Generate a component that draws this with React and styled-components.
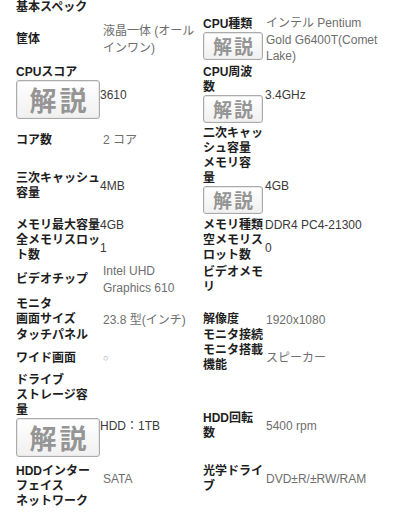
import React from "react";
import styled, { createGlobalStyle } from "styled-components";

const Global = createGlobalStyle`
  html, body { margin: 0; padding: 0; background: #fff; }
  body { font-family: "Liberation Sans", "Noto Sans CJK JP", sans-serif; }
`;

const Page = styled.div`
  width: 404px;
  padding: 0 16px;
  box-sizing: border-box;
  color: #222;
`;

const Title = styled.h2`
  margin: 0;
  font-size: 12px;
  line-height: 15px;
  font-weight: 700;
`;

const Grid = styled.div`
  display: grid;
  grid-template-columns: 84px 103px 62px 1fr;
  align-items: center;
`;

const Label = styled.div`
  font-size: 12px;
  line-height: 15px;
  font-weight: 700;
  color: #1e1e1e;
  white-space: nowrap;
`;

const Value = styled.div`
  font-size: 12px;
  line-height: 16.6px;
  white-space: nowrap;
  color: ${(p) => (p.$tone === "light" ? "#6e6e6e" : "#3a3a3a")};
  padding-left: ${(p) =>
    p.$tone === "light" ? (p.$side === "left" ? "3px" : "1px") : "0"};
`;

const Circle = styled.span`
  font-size: 9px;
  color: #9a9a9a;
`;

const Explain = styled.div`
  display: flex;
  align-items: center;
  justify-content: center;
  box-sizing: border-box;
  width: ${(p) => (p.$big ? "84px" : "60px")};
  height: ${(p) => (p.$big ? "39px" : "28px")};
  margin-bottom: ${(p) => (p.$big ? "7px" : "3px")};
  border: 1px solid #ababab;
  border-radius: 3px;
  background: linear-gradient(#ffffff, #f0f0f0);
  box-shadow: inset 0 0 0 1px #e8e8e8;
  color: #959595;
  font-family: "Noto Sans CJK JP", sans-serif;
  font-weight: 700;
  font-size: ${(p) => (p.$big ? "27px" : "19px")};
  letter-spacing: ${(p) => (p.$big ? "3px" : "2px")};
  line-height: 1;
  text-indent: ${(p) => (p.$big ? "3px" : "2px")};
`;

const rows = [
  {
    l: ["筐体"],
    lv: { t: "light", lines: ["液晶一体 (オール", "インワン)"] },
    r: ["CPU種類"],
    rBtn: true,
    rv: { t: "light", lines: ["インテル Pentium", "Gold G6400T(Comet", "Lake)"] },
  },
  {
    l: ["CPUスコア"],
    lBtn: true,
    lv: { t: "dark", lines: ["3610"] },
    r: ["CPU周波", "数"],
    rBtn: true,
    rv: { t: "dark", lines: ["3.4GHz"] },
  },
  {
    l: ["コア数"],
    lv: { t: "light", lines: ["2 コア"] },
    r: ["二次キャッ", "シュ容量"],
  },
  {
    l: ["三次キャッシュ", "容量"],
    lv: { t: "dark", lines: ["4MB"] },
    r: ["メモリ容", "量"],
    rBtn: true,
    rv: { t: "dark", lines: ["4GB"] },
  },
  {
    l: ["メモリ最大容量"],
    lv: { t: "dark", lines: ["4GB"] },
    r: ["メモリ種類"],
    rv: { t: "dark", lines: ["DDR4 PC4-21300"] },
  },
  {
    l: ["全メモリスロッ", "ト数"],
    lv: { t: "dark", lines: ["1"] },
    r: ["空メモリス", "ロット数"],
    rv: { t: "dark", lines: ["0"] },
  },
  {
    l: ["ビデオチップ"],
    lv: { t: "light", lines: ["Intel UHD", "Graphics 610"] },
    r: ["ビデオメモ", "リ"],
  },
  { l: ["モニタ"] },
  {
    l: ["画面サイズ"],
    lv: { t: "light", lines: ["23.8 型(インチ)"] },
    r: ["解像度"],
    rv: { t: "light", lines: ["1920x1080"] },
  },
  { l: ["タッチパネル"], r: ["モニタ接続"] },
  {
    l: ["ワイド画面"],
    lv: { t: "light", circle: true, lines: ["○"] },
    r: ["モニタ搭載", "機能"],
    rv: { t: "light", lines: ["スピーカー"] },
  },
  { l: ["ドライブ"] },
  {
    l: ["ストレージ容", "量"],
    lBtn: true,
    lv: { t: "dark", lines: ["HDD：1TB"] },
    r: ["HDD回転", "数"],
    rv: { t: "light", lines: ["5400 rpm"] },
  },
  {
    l: ["HDDインター", "フェイス"],
    lv: { t: "light", lines: ["SATA"] },
    r: ["光学ドライ", "ブ"],
    rv: { t: "light", lines: ["DVD±R/±RW/RAM"] },
  },
  { l: ["ネットワーク"] },
];

const Lines = ({ lines }) =>
  lines.map((s, i) => (
    <React.Fragment key={i}>
      {i > 0 && <br />}
      {s}
    </React.Fragment>
  ));

const Head = ({ lines, btn, big }) => (
  <div>
    {lines && (
      <Label>
        <Lines lines={lines} />
      </Label>
    )}
    {btn && <Explain $big={big}>解説</Explain>}
  </div>
);

const Val = ({ v, side }) =>
  v ? (
    <Value $tone={v.t} $side={side}>
      {v.circle ? <Circle>○</Circle> : <Lines lines={v.lines} />}
    </Value>
  ) : (
    <div />
  );

export default function App() {
  return (
    <>
      <Global />
      <Page>
        <Title>基本スペック</Title>
        <Grid>
          {rows.map((r, i) => (
            <React.Fragment key={i}>
              <Head lines={r.l} btn={r.lBtn} big />
              <Val v={r.lv} side="left" />
              <Head lines={r.r} btn={r.rBtn} />
              <Val v={r.rv} side="right" />
            </React.Fragment>
          ))}
        </Grid>
      </Page>
    </>
  );
}
